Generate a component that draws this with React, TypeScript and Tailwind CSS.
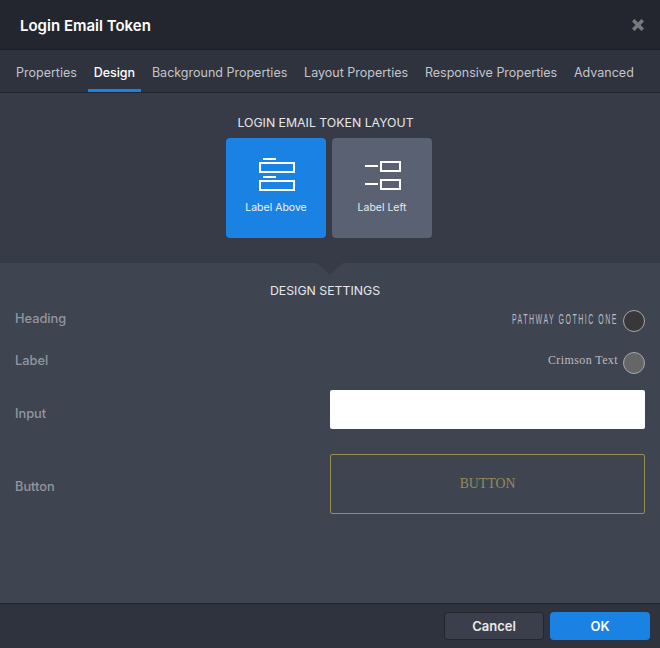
const tabs = ["Properties", "Design", "Background Properties", "Layout Properties", "Responsive Properties", "Advanced"]

function LabelAboveIcon() {
  return (
    <svg width="36" height="33" viewBox="0 0 36 33" fill="none" stroke="white" strokeWidth="2" shapeRendering="crispEdges" className="ml-[2px]">
      <path d="M4 1h13" />
      <rect x="1" y="5" width="34" height="9" />
      <path d="M4 19h13" />
      <rect x="1" y="23" width="34" height="9" />
    </svg>
  )
}

function LabelLeftIcon() {
  return (
    <svg width="36" height="29" viewBox="0 0 36 29" fill="none" stroke="white" strokeWidth="2" shapeRendering="crispEdges" className="ml-[2px]">
      <path d="M0 5h13" />
      <rect x="16" y="1" width="19" height="9" />
      <path d="M0 23h13" />
      <rect x="16" y="19" width="19" height="9" />
    </svg>
  )
}

function SettingRow({ label, font, swatch }: { label: string; font: React.ReactNode; swatch: string }) {
  return (
    <div className="flex items-center justify-between h-[42px] px-[15px]">
      <span className="pb-[4px] text-[12.8px] font-medium text-[#92969f]">{label}</span>
      <div className="flex items-center gap-[5px]">
        {font}
        <span className={`w-[22px] h-[22px] rounded-full border border-[#a3a6ab] ${swatch}`} />
      </div>
    </div>
  )
}

export default function App() {
  return (
    <div className="w-[660px] h-[648px] flex flex-col bg-[#3f4451] font-['Inter',sans-serif] overflow-hidden">
      <header className="h-[50px] flex items-center justify-between bg-[#23262e] pl-5 pr-[16px] border-b border-[#1d2026] shrink-0">
        <h1 className="pt-[3px] text-[15px] font-semibold text-white">Login Email Token</h1>
        <svg width="12" height="12" viewBox="0 0 12 12" fill="none" stroke="#77797d" strokeWidth="3.6">
          <path d="M1.2 1.2l9.6 9.6M10.8 1.2l-9.6 9.6" />
        </svg>
      </header>

      <nav className="h-[43px] flex items-stretch gap-[4.8px] pl-[10px] bg-[#2f333d] border-b border-[#23262e] shrink-0">
        {tabs.map((t) => (
          <div
            key={t}
            className={`px-[6px] flex items-center whitespace-nowrap border-b-[3px] text-[12.5px] pt-[7px] ${
              t === "Design" ? "border-[#1a82e2] text-white font-medium" : "border-transparent text-[#c3c6cc]"
            }`}
          >
            {t}
          </div>
        ))}
      </nav>

      <section className="relative h-[170px] bg-[#363b47] flex flex-col items-center pt-[21px] pr-[2px] shrink-0">
        <h2 className="pr-[7px] text-[12.3px] leading-[18px] text-[#e6e7ea]">LOGIN EMAIL TOKEN LAYOUT</h2>
        <div className="flex gap-[6px] mt-[6px]">
          <div className="w-[100px] h-[100px] rounded bg-[#1a82e2] flex flex-col items-center pt-[20px]">
            <LabelAboveIcon />
            <span className="mt-[9px] text-[10.5px] leading-4 text-[#eef4fb]">Label Above</span>
          </div>
          <div className="w-[100px] h-[100px] rounded bg-[#5a6172] flex flex-col items-center pt-[23px]">
            <LabelLeftIcon />
            <span className="mt-[10px] text-[10.5px] leading-4 text-[#e9ebee]">Label Left</span>
          </div>
        </div>
        <div className="absolute top-full left-[317px] border-x-[13px] border-t-[12px] border-x-transparent border-t-[#363b47]" />
      </section>

      <section className="flex-1">
        <h2 className="pr-[10px] text-center text-[12.3px] leading-[18px] mt-[19px] text-[#e6e7ea]">DESIGN SETTINGS</h2>
        <div>
          <SettingRow
            label="Heading"
            swatch="bg-[#38383a]"
            font={<span className="pb-[4px] origin-right scale-x-50 text-[14px] tracking-[3px] text-[#b9bcc2] font-['Liberation_Sans',sans-serif]">PATHWAY GOTHIC ONE</span>}
          />
          <SettingRow
            label="Label"
            swatch="bg-[#666666]"
            font={<span className="pb-[6px] text-[12px] tracking-[0.4px] text-[#b9bcc2] font-['Liberation_Serif',serif]">Crimson Text</span>}
          />
          <div className="flex items-center justify-between h-[39px] mt-[6px] px-[15px]">
            <span className="pt-[9px] text-[12.8px] font-medium text-[#92969f]">Input</span>
            <div className="w-[315px] h-[39px] rounded-[2px] bg-white" />
          </div>
          <div className="flex items-center justify-between h-[60px] mt-[25px] px-[15px]">
            <span className="pt-[6px] text-[12.8px] font-medium text-[#92969f]">Button</span>
            <div className="w-[315px] h-[60px] rounded-[2px] border border-[#978e50] flex items-center justify-center text-[13.8px] text-[#918b5c] font-['Liberation_Serif',serif]">
              BUTTON
            </div>
          </div>
        </div>
      </section>

      <footer className="h-[45px] flex items-center justify-end gap-[6px] pr-[10px] bg-[#2f333d] border-t border-[#23262e] shrink-0">
        <button className="w-[100px] h-[28px] pt-px rounded bg-[#3b3f4b] border border-[#23262e] text-[13px] font-semibold text-[#e9eaec]">Cancel</button>
        <button className="w-[100px] h-[28px] pt-px rounded bg-[#1a82e2] text-[13px] font-semibold text-white">OK</button>
      </footer>
    </div>
  )
}
